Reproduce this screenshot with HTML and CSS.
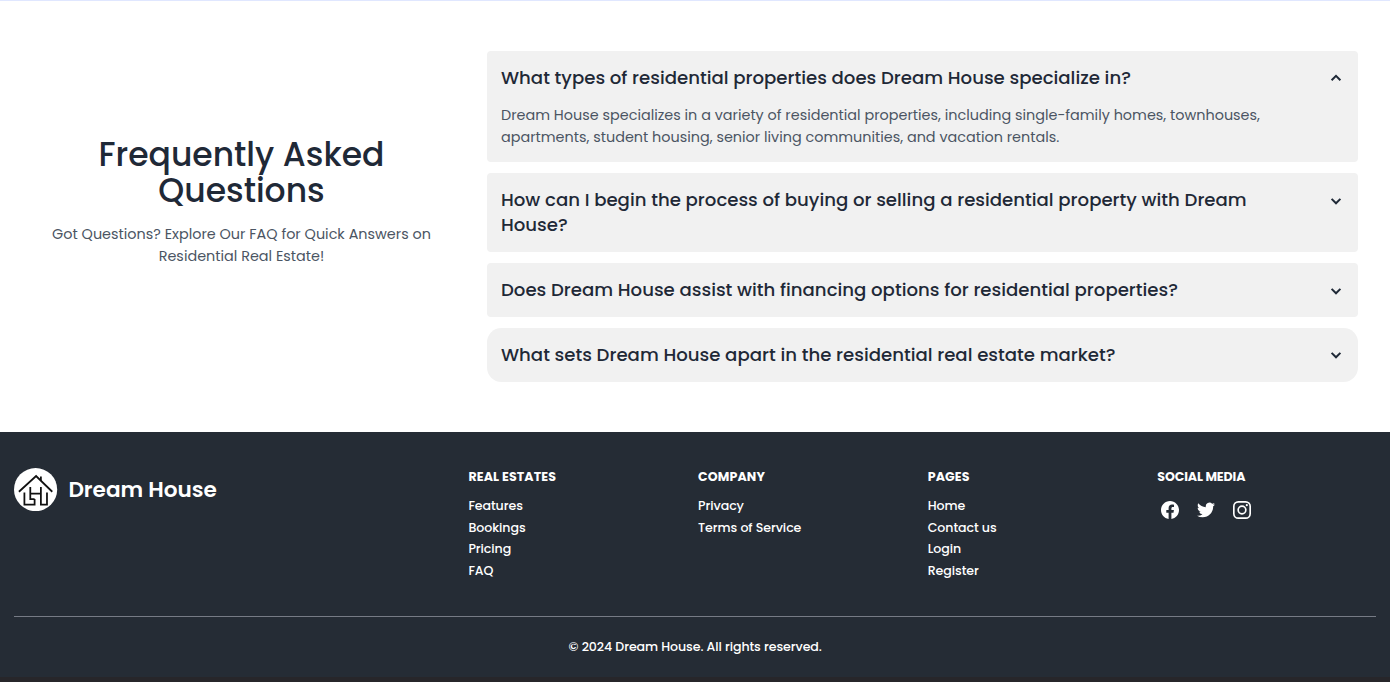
FILE: index.html
```
<!DOCTYPE html>
<html lang="en">
<head>
<meta charset="utf-8">
<title>Dream House</title>
<link rel="stylesheet" href="styles.css">
</head>
<body>
<main class="faq">
  <div class="intro">
    <h2 class="intro-title">Frequently Asked<br>Questions</h2>
    <p class="intro-text">Got Questions? Explore Our FAQ for Quick Answers on<br>Residential Real Estate!</p>
  </div>
  <div class="cards">
    <section class="card">
      <div class="card-head"><h3 class="question">What types of residential properties does Dream House specialize in?</h3><svg class="chevron" viewBox="0 0 16 16"><path d="M3.6 10.3 8 5.9l4.4 4.4"/></svg></div>
      <p class="answer">Dream House specializes in a variety of residential properties, including single-family homes, townhouses,<br>apartments, student housing, senior living communities, and vacation rentals.</p>
    </section>
    <section class="card">
      <div class="card-head"><h3 class="question">How can I begin the process of buying or selling a residential property with Dream<br>House?</h3><svg class="chevron" viewBox="0 0 16 16"><path d="M3.6 5.9 8 10.3l4.4-4.4"/></svg></div>
    </section>
    <section class="card">
      <div class="card-head"><h3 class="question">Does Dream House assist with financing options for residential properties?</h3><svg class="chevron" viewBox="0 0 16 16"><path d="M3.6 5.9 8 10.3l4.4-4.4"/></svg></div>
    </section>
    <section class="card card-last">
      <div class="card-head"><h3 class="question">What sets Dream House apart in the residential real estate market?</h3><svg class="chevron" viewBox="0 0 16 16"><path d="M3.6 5.9 8 10.3l4.4-4.4"/></svg></div>
    </section>
  </div>
</main>
<footer class="footer">
  <div class="footer-main">
    <div class="brand">
      <svg class="logo" viewBox="0 0 44 44"><circle cx="22" cy="22" r="22" fill="#fff"/><g fill="none" stroke="#111" stroke-width="1.8"><path d="M5 24.2 22.5 8.2 39 24.2"/><path d="M27.4 8.6v4.6"/><path d="M10.6 25v12.4H21v-5.8M21 31.6h-4.4V19.4M16.6 26h10.8M27.4 19.4v18h6.2V25"/></g></svg>
      <span class="brand-name">Dream House</span>
    </div>
    <div class="column"><h4 class="heading">REAL ESTATES</h4><a class="link">Features</a><a class="link">Bookings</a><a class="link">Pricing</a><a class="link">FAQ</a></div>
    <div class="column"><h4 class="heading">COMPANY</h4><a class="link">Privacy</a><a class="link">Terms of Service</a></div>
    <div class="column"><h4 class="heading">PAGES</h4><a class="link">Home</a><a class="link">Contact us</a><a class="link">Login</a><a class="link">Register</a></div>
    <div class="column"><h4 class="heading heading-tight">SOCIAL MEDIA</h4>
      <div class="social">
        <svg class="icon" viewBox="0 0 24 24"><path d="M24 12.07C24 5.4 18.63 0 12 0S0 5.4 0 12.07c0 6.03 4.39 11.02 10.13 11.93v-8.44H7.08v-3.49h3.05V9.41c0-3.02 1.79-4.69 4.53-4.69 1.31 0 2.68.24 2.68.24v2.97h-1.51c-1.49 0-1.96.93-1.96 1.89v2.25h3.33l-.53 3.49h-2.8V24C19.61 23.09 24 18.1 24 12.07z"/></svg>
        <svg class="icon" viewBox="0 0 24 24"><path d="M23.95 4.57a10 10 0 0 1-2.82.77 4.96 4.96 0 0 0 2.16-2.72c-.95.55-2 .95-3.13 1.18a4.92 4.92 0 0 0-8.38 4.48C7.69 8.09 4.07 6.13 1.64 3.16a4.82 4.82 0 0 0-.67 2.48c0 1.71.87 3.21 2.19 4.1a4.9 4.9 0 0 1-2.23-.62v.06a4.92 4.92 0 0 0 3.95 4.83 5 5 0 0 1-2.21.08 4.94 4.94 0 0 0 4.6 3.42A9.87 9.87 0 0 1 0 19.54a14 14 0 0 0 7.55 2.21c9.05 0 14-7.5 14-13.98 0-.21 0-.42-.02-.63a9.94 9.94 0 0 0 2.42-2.57z"/></svg>
        <svg class="icon" viewBox="0 0 24 24"><rect class="outline" x="1.1" y="1.1" width="21.8" height="21.8" rx="6"/><circle class="outline" cx="12" cy="12" r="5.1"/><circle cx="18.4" cy="5.6" r="1.45"/></svg>
      </div>
    </div>
  </div>
  <div class="copyright">© 2024 Dream House. All rights reserved.</div>
</footer>
</body>
</html>
```
FILE: styles.css
```
* { box-sizing: border-box; margin: 0; padding: 0; }
body { height: 682px; overflow: hidden; display: flex; flex-direction: column; background: #27262a; color: #1f2937; font-family: Poppins, Inter, "Open Sans", sans-serif; }
.faq { height: 432px; flex: none; display: grid; grid-template-columns: 419px 871px; column-gap: 36px; padding: 49.6px 32px 0; background: #fff; border-top: 1px solid #e0e7ff; }
.intro { padding-top: 86.4px; text-align: center; }
.intro-title { font-size: 33px; line-height: 36px; font-weight: 500; }
.intro-text { margin-top: 15px; font-size: 14.4px; line-height: 21.6px; color: #4b5563; }
.cards { display: flex; flex-direction: column; gap: 10.8px; }
.card { padding: 14.2px 14.4px 14.6px 14px; border-radius: 4px; background: #f1f1f1; }
.card-last { border-radius: 14.4px; }
.card-head { display: flex; justify-content: space-between; align-items: flex-start; }
.question { font-size: 18.14px; line-height: 25.2px; font-weight: 500; white-space: nowrap; }
.chevron { flex: none; width: 16px; height: 16px; margin-top: 5.4px; fill: none; stroke: #1f2937; stroke-width: 2; }
.answer { margin: 15.2px 0 -.8px; font-size: 14.4px; line-height: 21.6px; color: #4b5563; white-space: nowrap; }
.footer { height: 245px; flex: none; padding: 36px 14px 0 14.4px; background: #252c35; color: #fff; }
.footer-main { height: 149px; display: grid; grid-template-columns: 454px repeat(3, 229.65px) 1fr; border-bottom: 1px solid #767b85; }
.brand { height: 43.2px; display: flex; align-items: center; gap: 10.8px; }
.logo { width: 43.2px; height: 43.2px; }
.brand-name { font-size: 21.6px; font-weight: 600; line-height: 32px; }
.column { display: flex; flex-direction: column; }
.heading { font-size: 12.6px; line-height: 18px; font-weight: 700; letter-spacing: .12px; margin-bottom: 9px; }
.heading-tight { letter-spacing: -.12px; }
.link { font-size: 12.6px; line-height: 21.6px; font-weight: 500; letter-spacing: -.07px; }
.social { display: flex; gap: 18px; padding: 5.6px 0 0 3.6px; }
.icon { width: 18px; height: 18px; fill: #fff; }
.outline { fill: none; stroke: #fff; stroke-width: 2.2; }
.copyright { padding-top: 19.4px; text-align: center; font-size: 12.6px; line-height: 21.6px; font-weight: 500; letter-spacing: -.08px; }
```
